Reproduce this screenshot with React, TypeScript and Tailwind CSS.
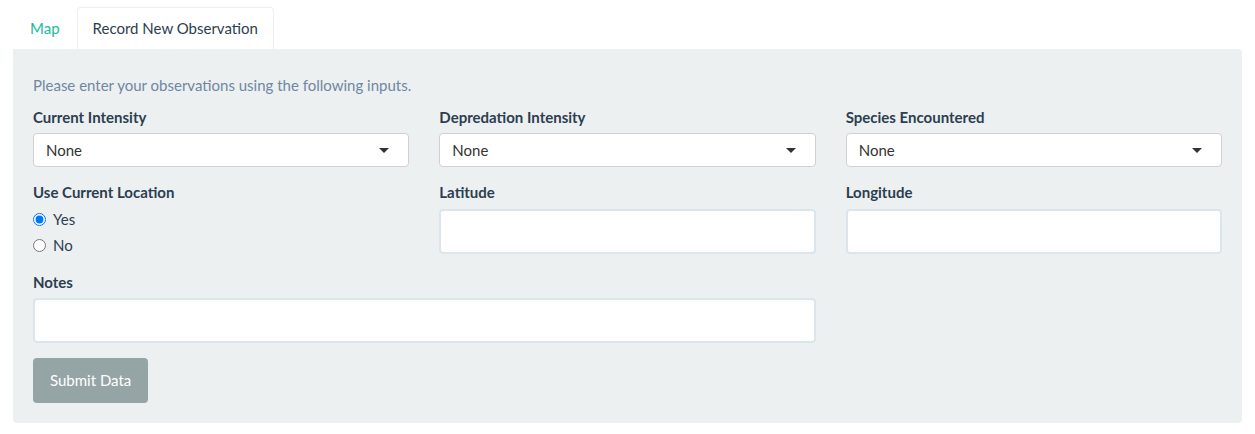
import { useState } from "react"

const font = { fontFamily: "Lato, 'Noto Sans', sans-serif" }

function Select({ label }: { label: string }) {
  return (
    <div>
      <label className="mb-[5px] block text-[15px] leading-[21px] font-bold text-[#2c3e50]">{label}</label>
      <div className="flex h-[34px] items-center justify-between rounded-[4px] border border-[#d0d0d0] bg-white pr-[19px] pl-[12px]">
        <span className="text-[15px] text-[#333333]">None</span>
        <svg width="10" height="5" viewBox="0 0 10 5">
          <path d="M0 0 L10 0 L5 5 Z" fill="#333333" />
        </svg>
      </div>
    </div>
  )
}

function TextInput({ label, gap = "mb-[5px]" }: { label: string; gap?: string }) {
  return (
    <div>
      <label className={`block text-[15px] leading-[21px] font-bold text-[#2c3e50] ${gap}`}>{label}</label>
      <input className="block h-[45px] w-full rounded-[4px] border-2 border-[#dce4ec] bg-white px-3 outline-none" />
    </div>
  )
}

export default function App() {
  const [useLoc, setUseLoc] = useState("yes")

  return (
    <div className="min-h-[434px] bg-white px-[13px] pt-[7px]" style={font}>
      <ul className="flex">
        <li className="flex h-[42px] items-center px-[17px] text-[15px] text-[#18bc9c]">Map</li>
        <li className="flex h-[42px] items-center rounded-t-[4px] border border-b-0 border-[#ecf0f1] bg-white px-[15px] text-[15px] text-[#2c3e50]">
          Record New Observation
        </li>
      </ul>
      <div className="rounded-b-[4px] rounded-tr-[4px] bg-[#ecf0f1] px-[20px] pt-[26px] pb-[20px]">
        <p className="mb-[11px] text-[15px] leading-[21px] text-[#6f87a1]">
          Please enter your observations using the following inputs.
        </p>
        <div className="grid grid-cols-3 gap-x-[30px]">
          <Select label="Current Intensity" />
          <Select label="Depredation Intensity" />
          <Select label="Species Encountered" />
        </div>
        <div className="mt-[15px] grid grid-cols-3 gap-x-[30px]">
          <div>
            <label className="mb-[6px] block text-[15px] leading-[21px] font-bold text-[#2c3e50]">
              Use Current Location
            </label>
            <div className="flex flex-col gap-[5px]">
              {[
                ["yes", "Yes"],
                ["no", "No"],
              ].map(([v, t]) => (
                <label key={v} className="flex h-[21px] items-center gap-[7px] text-[15px] text-[#2c3e50]">
                  <input
                    type="radio"
                    name="loc"
                    checked={useLoc === v}
                    onChange={() => setUseLoc(v)}
                    className="m-0 h-[13px] w-[13px] accent-[#0075ff]"
                  />
                  {t}
                </label>
              ))}
            </div>
          </div>
          <TextInput label="Latitude" gap="mb-[6px]" />
          <TextInput label="Longitude" gap="mb-[6px]" />
        </div>
        <div className="mt-[16px] grid grid-cols-3 gap-x-[30px]">
          <div className="col-span-2">
            <TextInput label="Notes" />
          </div>
        </div>
        <button className="mt-[15px] h-[45px] rounded-[4px] bg-[#95a5a6] px-[17px] text-[15px] text-white">
          Submit Data
        </button>
      </div>
    </div>
  )
}
